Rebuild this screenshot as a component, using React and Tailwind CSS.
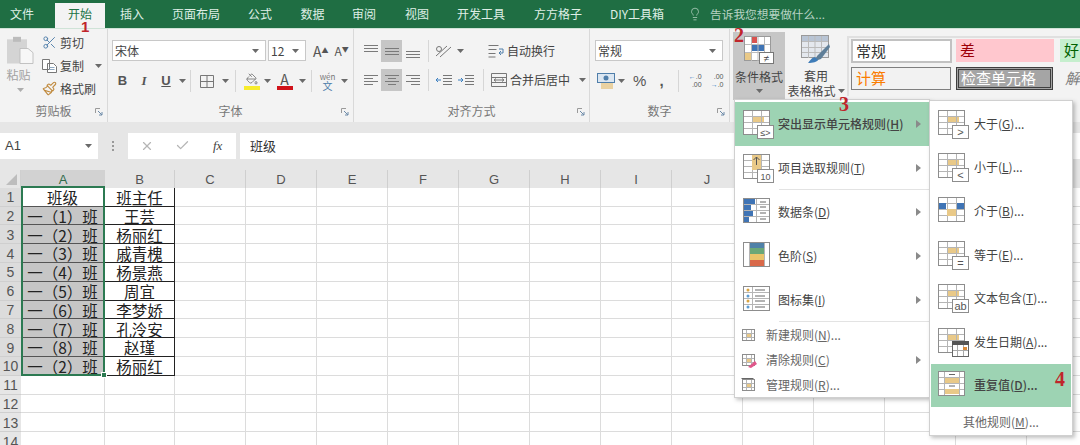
import React from 'react';
import { Scissors, Paintbrush, Lightbulb, X, Check, PaintBucket } from 'lucide-react';

const tabs = [
  ['文件', 'w-[55px] pr-[11px]'],
  ['开始', 'w-[50px] bg-[#f3f3f3] text-[#217346] mt-[3px] h-[25px] pb-[3px]'],
  ['插入', 'w-[54px]'],
  ['页面布局', 'w-[74px]'],
  ['公式', 'w-[54px]'],
  ['数据', 'w-[51px]'],
  ['审阅', 'w-[52px]'],
  ['视图', 'w-[54px]'],
  ['开发工具', 'w-[74px]'],
  ['方方格子', 'w-[80px]'],
  ['DIY工具箱', 'w-[78px]'],
];

const classes = ['一（1）班', '一（2）班', '一（3）班', '一（4）班', '一（5）班', '一（6）班', '一（7）班', '一（8）班', '一（2）班'];
const teachers = ['王芸', '杨丽红', '戚青槐', '杨景燕', '周宜', '李梦娇', '孔泠安', '赵瑾', '杨丽红'];
const letters = ['C', 'D', 'E', 'F', 'G', 'H', 'I', 'J', 'K', 'L', 'M', 'N', 'O'];

const Caret = () => (
  <svg width="7" height="4" viewBox="0 0 7 4" className="shrink-0">
    <path d="M0 0h7L3.5 4z" fill="#6a6a6a" />
  </svg>
);

const Launcher = () => (
  <svg width="8" height="8" viewBox="0 0 8 8" className="absolute right-[4px] bottom-[6px]">
    <path d="M.5 5V.5H5" fill="none" stroke="#9a9a9a" />
    <path d="M3 3l4 4M4 7h3V4" fill="none" stroke="#6c8aa8" />
  </svg>
);

const Sep = ({ className }) => <div className={`flex justify-center h-[22px] ${className}`}><div className="w-px h-full bg-[#d6d6d6]" /></div>;

const Slot = ({ className, children }) => <div className={`flex items-center justify-center h-[22px] ${className}`}>{children}</div>;

// rows of text lines for the alignment buttons
const Lines = ({ rows, color = '#7a7a7a' }) => (
  <svg width="16" height="14" viewBox="0 0 16 14">
    {rows.map(([y, a, b]) => <path key={y} d={`M${a} ${y}.5H${b}`} stroke={color} />)}
  </svg>
);

const Group = ({ className, label, launcher = true, children }) => (
  <div className={`relative flex flex-col h-full border-r border-[#d9d9d9] ${className}`}>
    <div className="flex-1 min-h-0">{children}</div>
    <div className="h-[22px] flex items-center justify-center text-[12px] text-[#777]">{label}</div>
    {launcher && <Launcher />}
  </div>
);

const Combo = ({ className, text }) => (
  <div className={`h-[21px] bg-white border border-[#c8c8c8] flex items-center justify-between pl-[2px] pr-[6px] text-[12px] text-[#444] ${className}`}>
    <span>{text}</span>
    <Caret />
  </div>
);

const ClipRow = ({ icon, text, caret }) => (
  <div className="flex items-center h-[23px]">
    <div className="w-[18px] flex justify-center">{icon}</div>
    <span className="ml-[2px] text-[12px] text-[#444]">{text}</span>
    {caret && <div className="ml-[11px]"><Caret /></div>}
  </div>
);

// small table drawing used by most of the menu entries
const RuleIcon = ({ children, band = true, cols = [9, 18], rows = [6, 12, 18] }) => (
  <svg width="32" height="32" viewBox="0 0 32 32" className="shrink-0">
    <rect x=".5" y="2.5" width="26" height="24" fill="#fff" stroke="#8d8d8d" />
    {band && <rect x="9" y="8" width="12" height="7" fill="#e9c988" />}
    {cols.map((x) => <path key={x} d={`M${x}.5 3V26`} stroke="#b5b5b5" />)}
    {rows.map((y) => <path key={y} d={`M1 ${y + 2}.5H26`} stroke="#b5b5b5" />)}
    {children}
  </svg>
);

const Badge = ({ text, size = 9 }) => (
  <g>
    <rect x="14.5" y="17.5" width="16" height="13" fill="#fff" stroke="#8d8d8d" />
    <text x="22.5" y="27.5" textAnchor="middle" fontSize={size} fill="#555" fontFamily="Liberation Sans">{text}</text>
  </g>
);

const Arrow = () => (
  <svg width="5" height="8" viewBox="0 0 5 8" className="absolute left-[181px] top-1/2 -translate-y-1/2">
    <path d="M0 0l5 4-5 4z" fill="#8a8a8a" />
  </svg>
);

const MenuItem = ({ icon, text, k, active, arrow = true, line }) => (
  <div className={`relative h-[44px] flex items-center pl-[8px] text-[12px] text-[#444] ${active ? 'bg-[#9dd3b3] text-[#1f3a2a] font-medium' : ''}`}>
    {icon}
    <span className="ml-[3px]">{text}(<u>{k}</u>)</span>
    {arrow && <Arrow />}
    {line && <div className="absolute left-[44px] right-0 bottom-0 h-px bg-[#e3e3e3]" />}
  </div>
);

const SmallItem = ({ icon, text, k, dots, arrow }) => (
  <div className="relative h-[25px] flex items-center pl-[6px] text-[12px] text-[#666]">
    <div className="w-[16px] flex justify-center">{icon}</div>
    <span className="ml-[9px]">{text}(<u>{k}</u>){dots && '...'}</span>
    {arrow && <Arrow />}
  </div>
);

const SubItem = ({ icon, text, k, active }) => (
  <div className={`relative h-[43.6px] flex items-center pl-[7px] text-[12px] text-[#444] ${active ? 'bg-[#9dd3b3] text-[#1f3a2a] font-medium' : ''}`}>
    {icon}
    <span className="ml-[4px]">{text}(<u>{k}</u>)...</span>
  </div>
);

const SmallRule = ({ children }) => (
  <svg width="16" height="16" viewBox="0 0 16 16">
    <rect x="1.5" y="2.5" width="12" height="11" fill="#fff" stroke="#8d8d8d" />
    <rect x="5" y="6" width="6" height="4" fill="#e9c988" />
    <path d="M5.5 3v10M10.5 3v10M2 6.5h11M2 10.5h11" stroke="#b5b5b5" />
    {children}
  </svg>
);

const NumBadge = ({ className, children }) => (
  <div className={`absolute text-[#c0252b] font-bold leading-none ${className}`}>{children}</div>
);

export default function App() {
  return (
    <div className="relative w-[1080px] h-[445px] overflow-hidden bg-white [font-family:'Noto_Sans_CJK_SC',sans-serif]">
      {/* tab bar */}
      <div className="flex h-[28px] bg-[#1f6e43] text-[12px] text-[#dfeee6]">
        {tabs.map(([name, w]) => (
          <div key={name} className={`flex items-center justify-center ${w}`}>{name}</div>
        ))}
        <div className="ml-[12px] flex items-center text-[#b8d3c4]">
          <Lightbulb size={14} strokeWidth={1.3} />
          <span className="ml-[8px] text-[11.7px]">告诉我您想要做什么...</span>
        </div>
      </div>

      {/* ribbon */}
      <div className="flex h-[94px] bg-[#f3f3f3] border-t border-[#cfe3d7]">
        <Group className="w-[108px]" label="剪贴板">
          <div className="flex pt-[7px]">
            <div className="w-[40px] flex flex-col items-center">
              <svg width="28" height="30" viewBox="0 0 28 36" preserveAspectRatio="none">
                <rect x="1" y="4" width="20" height="29" fill="#d4d4d4" />
                <rect x="7" y="1" width="8" height="6" fill="#bcbcbc" />
                <path d="M14 15h8l5 5v13H14z" fill="#f7f7f7" stroke="#bdbdbd" />
              </svg>
              <span className="text-[12px] leading-[14px] text-[#a2a2a2] mt-[2px] -ml-[3px]">粘贴</span>
              <div className="mt-[6px] opacity-50"><Caret /></div>
            </div>
            <div className="-mt-[5px]">
              <ClipRow icon={<Scissors size={15} color="#4f7eaa" strokeWidth={1.5} />} text="剪切" />
              <ClipRow
                icon={
                  <svg width="15" height="14" viewBox="0 0 15 14">
                    <path d="M.5.5h7v10h-7zM5.5 4.5h6l3 3v6h-9z" fill="#fff" stroke="#777" />
                    <path d="M7.5 8.5h5M7.5 10.5h5" stroke="#8fa9c2" />
                  </svg>
                }
                text="复制"
                caret
              />
              <ClipRow icon={<Paintbrush size={15} color="#c08a3e" strokeWidth={1.8} />} text="格式刷" />
            </div>
          </div>
        </Group>

        <Group className="w-[246px]" label="字体">
          <div className="flex items-center pl-[4px] pt-[11px]">
            <Combo className="w-[154px]" text="宋体" />
            <Combo className="w-[38px] ml-[2px]" text="12" />
            <span className="ml-[7px] text-[14px] text-[#555] leading-none">A<sup className="text-[7px] text-[#555]">▲</sup></span>
            <span className="ml-[6px] text-[12px] text-[#555] leading-none">A<sup className="text-[7px] text-[#555]">▼</sup></span>
          </div>
          <div className="flex items-center pl-[4px] mt-[9px] text-[13px] text-[#555]">
            <Slot className="w-[21px] font-bold [font-family:'Liberation_Sans',sans-serif]">B</Slot>
            <Slot className="w-[22px] italic font-bold [font-family:'Liberation_Serif',serif]">I</Slot>
            <Slot className="w-[22px] underline font-bold [font-family:'Liberation_Sans',sans-serif]">U</Slot>
            <Slot className="w-[10px]"><Caret /></Slot>
            <Sep className="w-[7px]" />
            <Slot className="w-[26px]">
              <svg width="14" height="13" viewBox="0 0 14 13"><path d="M.5.5h13v12H.5zM7 .5v12M.5 6.5h13" fill="none" stroke="#777" /></svg>
            </Slot>
            <Slot className="w-[10px]"><Caret /></Slot>
            <Sep className="w-[11px]" />
            <Slot className="w-[22px]">
              <div className="flex flex-col items-center">
                <PaintBucket size={12} color="#666" strokeWidth={1.5} />
                <div className="w-[16px] h-[4px] bg-[#f7ec2c] mt-[1px]" />
              </div>
            </Slot>
            <Slot className="w-[8px]"><Caret /></Slot>
            <Slot className="w-[27px]">
              <div className="flex flex-col items-center leading-[12px] text-[14px]">
                <span>A</span>
                <div className="w-[16px] h-[4px] bg-[#d0121a] mt-[1px]" />
              </div>
            </Slot>
            <Slot className="w-[8px]"><Caret /></Slot>
            <Sep className="w-[10px]" />
            <Slot className="w-[23px]">
              <div className="flex flex-col items-center leading-[9px]">
                <span className="text-[8px] text-[#777]">wén</span>
                <span className="text-[10px] text-[#4f7eaa]">文</span>
              </div>
            </Slot>
            <Slot className="w-[10px]"><Caret /></Slot>
          </div>
        </Group>

        <Group className="w-[236px]" label="对齐方式">
          <div className="flex items-center pl-[7px] pt-[11px] h-[33px]">
            <Slot className="w-[20px]"><Lines rows={[[1, 1, 15], [4, 1, 15], [7, 1, 15]]} /></Slot>
            <Slot className="w-[21px] bg-[#c6c6c6]"><Lines rows={[[4, 1, 15], [7, 1, 15], [10, 1, 15]]} /></Slot>
            <Slot className="w-[22px]"><Lines rows={[[7, 1, 15], [10, 1, 15], [13, 1, 15]]} /></Slot>
            <Sep className="w-[8px]" />
            <Slot className="w-[24px]">
              <svg width="18" height="14" viewBox="0 0 18 14"><path d="M1 12L12 2M5 13L16 3" stroke="#777" fill="none" /><circle cx="4" cy="5" r="2.5" fill="none" stroke="#777" /></svg>
            </Slot>
            <Slot className="w-[8px]"><Caret /></Slot>
            <div className="ml-[24px] w-[16px]">
              <svg width="16" height="14" viewBox="0 0 16 14"><path d="M.5 1.5h10M.5 5.5h8M.5 9.5h7M.5 13h7" stroke="#777" /><path d="M11 5h4v4h-4M13 7l-2 2 2 2" fill="none" stroke="#4f7eaa" /></svg>
            </div>
            <span className="ml-[3px] text-[12px] text-[#444]">自动换行</span>
          </div>
          <div className="flex items-center pl-[7px] mt-[7px] h-[22px]">
            <Slot className="w-[20px]"><Lines rows={[[2, 1, 15], [5, 1, 10], [8, 1, 15], [11, 1, 10]]} /></Slot>
            <Slot className="w-[21px] bg-[#c6c6c6]"><Lines rows={[[2, 1, 15], [5, 4, 12], [8, 1, 15], [11, 4, 12]]} /></Slot>
            <Slot className="w-[22px]"><Lines rows={[[2, 1, 15], [5, 6, 15], [8, 1, 15], [11, 6, 15]]} /></Slot>
            <Sep className="w-[8px]" />
            <Slot className="w-[24px]">
              <svg width="16" height="14" viewBox="0 0 16 14"><path d="M7 2.5h9M7 5.5h9M7 8.5h9M7 11.5h9" stroke="#777" /><path d="M5 7H0M2 5L0 7l2 2" fill="none" stroke="#3b7fc0" /></svg>
            </Slot>
            <Slot className="w-[20px]">
              <svg width="16" height="14" viewBox="0 0 16 14"><path d="M7 2.5h9M7 5.5h9M7 8.5h9M7 11.5h9" stroke="#777" /><path d="M0 7h5M3 5l2 2-2 2" fill="none" stroke="#3b7fc0" /></svg>
            </Slot>
            <Sep className="w-[15px]" />
            <div className="w-[16px]">
              <svg width="16" height="14" viewBox="0 0 16 14"><path d="M.5.5h15v13H.5zM.5 4.5h15M.5 9.5h15" fill="none" stroke="#777" /><path d="M3 7h10M5 5.5L3 7l2 1.5M11 5.5L13 7l-2 1.5" fill="none" stroke="#777" /></svg>
            </div>
            <span className="ml-[3px] text-[12px] text-[#444]">合并后居中</span>
            <div className="ml-[9px]"><Caret /></div>
          </div>
        </Group>

        <Group className="w-[140px]" label="数字">
          <div className="pl-[5px] pt-[11px]">
            <Combo className="w-[128px]" text="常规" />
          </div>
          <div className="flex items-center pl-[6px] mt-[9px] h-[22px] text-[#555]">
            <Slot className="w-[20px]">
              <svg width="18" height="16" viewBox="0 0 18 16"><rect x=".5" y=".5" width="17" height="9" fill="#dbe6f1" stroke="#4f7eaa" /><circle cx="9" cy="5" r="2.5" fill="#4f7eaa" /><path d="M4 11h12M4 13h12M4 15h12" stroke="#e0b050" /></svg>
            </Slot>
            <Slot className="w-[12px]"><Caret /></Slot>
            <Slot className="w-[24px] text-[15px] [font-family:'Liberation_Sans',sans-serif]">%</Slot>
            <Slot className="w-[20px] font-bold text-[15px] [font-family:'Liberation_Sans',sans-serif]">,</Slot>
            <Sep className="w-[14px]" />
            <Slot className="w-[20px] text-[7px] leading-[8px] text-right [font-family:'Liberation_Sans',sans-serif]"><div><span className="text-[#3b7fc0]">←</span>.0<br />.00</div></Slot>
            <Slot className="w-[24px] text-[7px] leading-[8px] text-right [font-family:'Liberation_Sans',sans-serif]"><div>.00<br /><span className="text-[#3b7fc0]">→</span>.0</div></Slot>
          </div>
        </Group>

        <div className="w-[117px] h-full flex pl-[3px] pt-[3px]">
          <div className="w-[52px] h-[68px] bg-[#c6c6c6] flex flex-col items-center">
            <svg width="30" height="28" viewBox="0 0 30 28" className="mt-[4px]">
              <rect x=".5" y=".5" width="26" height="24" fill="#fff" stroke="#9a9a9a" />
              <rect x="7" y="1" width="6" height="6" fill="#d9534f" />
              <rect x="7" y="9" width="14" height="6" fill="#3f74b5" />
              <rect x="1" y="16" width="7" height="8" fill="#e9c988" />
              <path d="M7.5 1v24M14 1v24M20.5 1v24M1 8.5h25M1 16.5h25" stroke="#bbb" />
              <rect x="15.5" y="16.5" width="14" height="11" fill="#fff" stroke="#777" />
              <text x="22.5" y="25.5" textAnchor="middle" fontSize="10" fill="#444" fontFamily="Liberation Sans">≠</text>
            </svg>
            <span className="text-[12px] leading-[14px] text-[#444] mt-[6px]">条件格式</span>
            <div className="mt-[5px]"><Caret /></div>
          </div>
          <div className="w-[62px] flex flex-col items-center">
            <svg width="30" height="30" viewBox="0 0 30 30" className="mt-[3px]">
              <rect x=".5" y=".5" width="27" height="22" fill="#e4e8ee" stroke="#9a9a9a" />
              <rect x="1" y="1" width="26" height="5" fill="#b8c4d4" />
              <path d="M7.5 1v22M14 1v22M20.5 1v22M1 6.5h26M1 12.5h26M1 17.5h26" stroke="#bbb" />
              <path d="M28 9L16 21l-2 5 6-2L29 12z" fill="#5f7f99" />
              <path d="M14 22c-4 1-5 4-7 6 5 0 9-1 10-3z" fill="#3f7cb8" />
            </svg>
            <span className="text-[12px] leading-[14px] text-[#444] mt-[4px]">套用</span>
            <div className="flex items-center">
              <span className="text-[12px] leading-[16px] text-[#444] whitespace-nowrap">表格格式</span>
              <div className="ml-[2px]"><Caret /></div>
            </div>
          </div>
        </div>

        <div className="flex-1 h-[60px] mt-[7px] pl-[2px] bg-[#f3f3f3] border-t-2 border-l-2 border-[#e0e0e0] text-[15px] overflow-hidden">
          <div className="flex h-[24px] mt-px">
            <div className="shrink-0 w-[101px] h-full bg-white border-2 border-[#c2c2c2] flex items-center pl-[3px] text-[#333]">常规</div>
            <div className="shrink-0 w-[98px] ml-[4px] h-[23px] bg-[#ffc7ce] text-[#9c0006] flex items-center pl-[4px]">差</div>
            <div className="shrink-0 w-[40px] ml-[6px] h-[23px] bg-[#c6efce] text-[#006100] flex items-center pl-[4px]">好</div>
          </div>
          <div className="flex h-[23px] mt-[4px]">
            <div className="shrink-0 w-[100px] h-full bg-[#f2f2f2] border border-[#7f7f7f] text-[#fa7d00] flex items-center pl-[4px]">计算</div>
            <div className="shrink-0 w-[97px] ml-[5px] h-full bg-[#a5a5a5] border-[3px] border-double border-[#3f3f3f] text-white flex items-center pl-[2px]">检查单元格</div>
            <div className="shrink-0 ml-[12px] h-full flex items-center italic text-[#7f7f7f]">解</div>
          </div>
        </div>
      </div>

      {/* formula bar */}
      <div className="flex items-center h-[48px] bg-[#e6e6e6] pb-[1px]">
        <div className="w-[98px] h-[26px] bg-white flex items-center justify-between pl-[5px] pr-[6px] text-[13px] text-[#444] [font-family:'Liberation_Sans',sans-serif]">
          A1
          <Caret />
        </div>
        <div className="w-[30px] flex flex-col items-center gap-[2px]">
          <div className="w-[2px] h-[2px] bg-[#999]" />
          <div className="w-[2px] h-[2px] bg-[#999]" />
          <div className="w-[2px] h-[2px] bg-[#999]" />
        </div>
        <div className="w-[108px] h-[26px] bg-white flex items-center pl-[12px]">
          <X size={14} color="#b5b5b5" />
          <Check size={15} color="#b5b5b5" className="ml-[21px]" />
          <span className="ml-[23px] italic text-[13px] text-[#444] [font-family:'Liberation_Serif',serif]">fx</span>
        </div>
        <div className="flex-1 h-[26px] ml-[4px] bg-white flex items-center pl-[10px] text-[13px] text-[#333]">班级</div>
      </div>

      {/* sheet */}
      <div className="relative grid grid-cols-[21px_84px_70px_repeat(13,71px)] auto-rows-[18.8px] bg-white text-[15.5px] text-[#222]">
        <div className="h-[18px] bg-[#e6e6e6] flex items-center justify-end pr-[3px] border-r border-[#cfcfcf]">
          <svg width="11" height="11" viewBox="0 0 11 11"><path d="M11 0v11H0z" fill="#bdbdbd" /></svg>
        </div>
        <div className="h-[18px] pt-[2px] bg-[#d2d2d2] text-[#2f6b4a] text-[13px] flex items-center justify-center [font-family:'Liberation_Sans',sans-serif]">A</div>
        <div className="h-[18px] pt-[2px] bg-[#e6e6e6] text-[#555] text-[13px] flex items-center justify-center border-r border-[#cfcfcf] [font-family:'Liberation_Sans',sans-serif]">B</div>
        {letters.map((l) => (
          <div key={l} className="h-[18px] pt-[2px] bg-[#e6e6e6] text-[#555] text-[13px] flex items-center justify-center border-r border-[#cfcfcf] [font-family:'Liberation_Sans',sans-serif]">{l}</div>
        ))}

        {[...Array(14).keys()].map((r) => (
          <React.Fragment key={r}>
            <div className={`-mt-[1px] h-[18.8px] pt-[2px] flex items-center justify-center text-[14px] text-[#555] border-b border-[#cfcfcf] [font-family:'Liberation_Sans',sans-serif] ${r < 10 ? 'bg-[#dcdcdc]' : 'bg-[#e6e6e6]'}`}>{r + 1}</div>
            {r === 0 && (
              <>
                <div className="-mt-[1px] h-[18.8px] pt-[2px] flex items-center justify-center border-b border-[#555] border-r">班级</div>
                <div className="-mt-[1px] h-[18.8px] pt-[2px] flex items-center justify-center border-b border-r border-[#222]">班主任</div>
              </>
            )}
            {r > 0 && r < 10 && (
              <>
                <div className="-mt-[1px] h-[18.8px] pt-[2px] bg-[#c6c6c6] flex items-center justify-center border-b border-r border-[#555] whitespace-nowrap">{classes[r - 1]}</div>
                <div className="-mt-[1px] h-[18.8px] pt-[2px] flex items-center justify-center border-b border-r border-[#222]">{teachers[r - 1]}</div>
              </>
            )}
            {r >= 10 && (
              <>
                <div className="-mt-[1px] h-[18.8px] border-b border-r border-[#dcdcdc]" />
                <div className="-mt-[1px] h-[18.8px] border-b border-r border-[#dcdcdc]" />
              </>
            )}
            {letters.map((l) => <div key={l} className="-mt-[1px] h-[18.8px] border-b border-r border-[#dcdcdc]" />)}
          </React.Fragment>
        ))}

        {/* selection over A1:A10 */}
        <div className="absolute left-[21px] top-[16px] w-[84px] h-[190px] border-2 border-[#2c7a52] pointer-events-none" />
        <div className="absolute left-[101px] top-[202px] w-[6px] h-[6px] bg-[#2c7a52] border border-white" />
      </div>

      {/* conditional format menu */}
      <div className="absolute left-[734px] top-[99px] w-[196px] h-[299px] pt-[2px] bg-white border border-[#d0d0d0] shadow-[2px_2px_4px_rgba(0,0,0,0.25)]">
        <MenuItem active text="突出显示单元格规则" k="H" icon={
          <RuleIcon>
            <Badge text="≤>" />
          </RuleIcon>
        } />
        <MenuItem line text="项目选取规则" k="T" icon={
          <RuleIcon band={false}>
            <rect x="9" y="3" width="9" height="15" fill="#e9c988" />
            <path d="M13.5 13V5M10.5 8l3-3 3 3" fill="none" stroke="#555" />
            <Badge text="10" />
          </RuleIcon>
        } />
        <MenuItem text="数据条" k="D" icon={
          <RuleIcon band={false} cols={[13]}>
            <rect x="1" y="3" width="11" height="5" fill="#3f74b5" />
            <rect x="1" y="9" width="7" height="5" fill="#3f74b5" />
            <rect x="1" y="15" width="9" height="5" fill="#3f74b5" />
            <rect x="1" y="21" width="5" height="5" fill="#3f74b5" />
            <path d="M17 6h6M17 11h6M17 17h6M17 23h6" stroke="#666" />
          </RuleIcon>
        } />
        <MenuItem text="色阶" k="S" icon={
          <RuleIcon band={false} cols={[6, 21]} rows={[]}>
            <rect x="7" y="3" width="14" height="5" fill="#4f81a8" />
            <rect x="7" y="8" width="14" height="6" fill="#6aa777" />
            <rect x="7" y="14" width="14" height="6" fill="#e9c46a" />
            <rect x="7" y="20" width="14" height="6" fill="#d9694a" />
          </RuleIcon>
        } />
        <MenuItem text="图标集" k="I" line icon={
          <RuleIcon band={false} cols={[9]}>
            <circle cx="5" cy="6" r="1.5" fill="#d9a441" />
            <circle cx="5" cy="12" r="1.5" fill="#5c9bd1" />
            <circle cx="5" cy="17" r="1.5" fill="#d9a441" />
            <circle cx="5" cy="23" r="1.5" fill="#5c9bd1" />
            <path d="M12 6h10M12 12h10M12 17h10M12 23h10" stroke="#666" />
          </RuleIcon>
        } />
        <SmallItem dots text="新建规则" k="N" icon={<SmallRule />} />
        <SmallItem arrow text="清除规则" k="C" icon={
          <SmallRule>
            <path d="M7 15l7-6 2 3-6 4z" fill="#e0568a" />
          </SmallRule>
        } />
        <SmallItem dots text="管理规则" k="R" icon={<SmallRule><path d="M.5 1.5h12" stroke="#666" /></SmallRule>} />
      </div>

      {/* submenu */}
      <div className="absolute left-[929px] top-[100px] w-[144px] h-[336px] pt-[1px] px-px bg-white border border-[#d0d0d0] shadow-[2px_2px_4px_rgba(0,0,0,0.25)]">
        <SubItem text="大于" k="G" icon={<RuleIcon><Badge text=">" size={11} /></RuleIcon>} />
        <SubItem text="小于" k="L" icon={<RuleIcon><Badge text="<" size={11} /></RuleIcon>} />
        <SubItem text="介于" k="B" icon={
          <RuleIcon band={false}>
            <rect x="1" y="8" width="7" height="6" fill="#3f74b5" />
            <rect x="19" y="8" width="7" height="6" fill="#3f74b5" />
            <rect x="9" y="14" width="9" height="7" fill="#e9c988" />
          </RuleIcon>
        } />
        <SubItem text="等于" k="E" icon={<RuleIcon><Badge text="=" size={11} /></RuleIcon>} />
        <SubItem text="文本包含" k="T" icon={<RuleIcon><Badge text="ab" size={11} /></RuleIcon>} />
        <SubItem text="发生日期" k="A" icon={
          <RuleIcon>
            <rect x="14.5" y="15.5" width="16" height="15" fill="#fff" stroke="#666" />
            <rect x="14" y="15" width="17" height="4" fill="#555" />
            <path d="M19.5 19v11M25.5 19v11M15 24.5h15" stroke="#aaa" />
            <rect x="25" y="21" width="4" height="3" fill="#d98a3a" />
          </RuleIcon>
        } />
        <SubItem active text="重复值" k="D" icon={
          <RuleIcon band={false} cols={[6, 21]}>
            <rect x="7" y="9" width="14" height="5" fill="#e9c988" />
            <rect x="7" y="20" width="14" height="5" fill="#e9c988" />
            <path d="M11 5.5h6M11 17h6" stroke="#666" />
          </RuleIcon>
        } />
        <div className="h-[29px] flex items-center justify-center text-[12px] text-[#666]">其他规则(<u>M</u>)...</div>
      </div>

      {/* red step numbers */}
      <NumBadge className="left-[81px] top-[19px] [font-family:'Liberation_Sans',sans-serif] text-[15px]">1</NumBadge>
      <NumBadge className="left-[734px] top-[25px] [font-family:'Liberation_Serif',serif] text-[20px]">2</NumBadge>
      <NumBadge className="left-[839px] top-[94px] [font-family:'Liberation_Serif',serif] text-[20px]">3</NumBadge>
      <NumBadge className="left-[1055px] top-[369px] [font-family:'Liberation_Serif',serif] text-[20px]">4</NumBadge>
    </div>
  );
}
